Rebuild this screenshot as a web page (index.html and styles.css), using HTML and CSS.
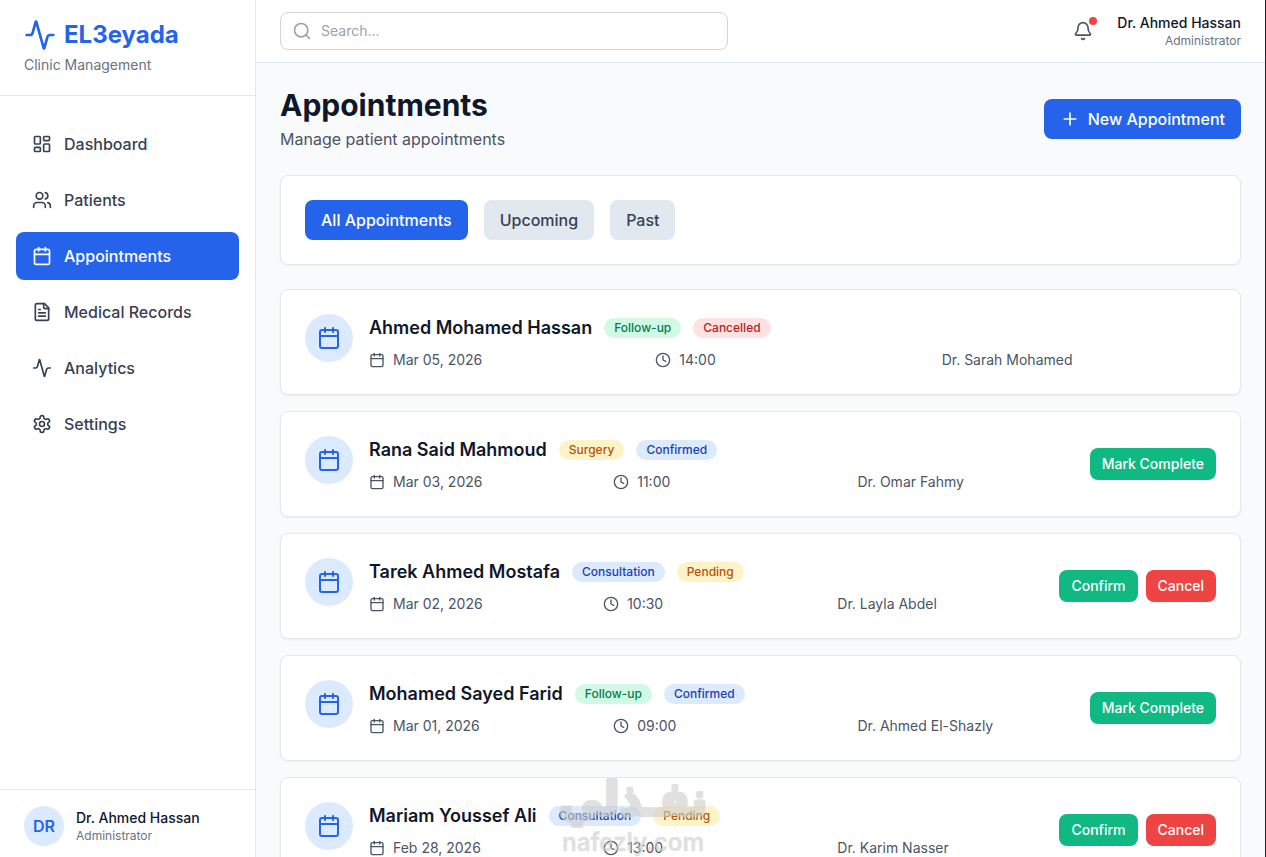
FILE: index.html
```html
<!DOCTYPE html>
<html lang="en">
<head>
<meta charset="utf-8">
<title>EL3eyada - Appointments</title>
<link rel="stylesheet" href="styles.css">
</head>
<body>
<svg class="sprite" aria-hidden="true">
  <symbol id="activity" viewBox="0 0 24 24"><path d="M22 12h-2.48a2 2 0 0 0-1.93 1.46l-2.35 8.36a.25.25 0 0 1-.48 0L9.24 2.18a.25.25 0 0 0-.48 0l-2.35 8.36A2 2 0 0 1 4.49 12H2"/></symbol>
  <symbol id="dashboard" viewBox="0 0 24 24"><rect x="3" y="3" width="7" height="9" rx="1"/><rect x="14" y="3" width="7" height="5" rx="1"/><rect x="14" y="12" width="7" height="9" rx="1"/><rect x="3" y="16" width="7" height="5" rx="1"/></symbol>
  <symbol id="users" viewBox="0 0 24 24"><path d="M16 21v-2a4 4 0 0 0-4-4H6a4 4 0 0 0-4 4v2"/><circle cx="9" cy="7" r="4"/><path d="M22 21v-2a4 4 0 0 0-3-3.87"/><path d="M16 3.13a4 4 0 0 1 0 7.75"/></symbol>
  <symbol id="calendar" viewBox="0 0 24 24"><path d="M8 2v4"/><path d="M16 2v4"/><rect x="3" y="4" width="18" height="18" rx="2"/><path d="M3 10h18"/></symbol>
  <symbol id="file" viewBox="0 0 24 24"><path d="M15 2H6a2 2 0 0 0-2 2v16a2 2 0 0 0 2 2h12a2 2 0 0 0 2-2V7Z"/><path d="M14 2v4a2 2 0 0 0 2 2h4"/><path d="M10 9H8"/><path d="M16 13H8"/><path d="M16 17H8"/></symbol>
  <symbol id="settings" viewBox="0 0 24 24"><path d="M12.22 2h-.44a2 2 0 0 0-2 2v.18a2 2 0 0 1-1 1.73l-.43.25a2 2 0 0 1-2 0l-.15-.08a2 2 0 0 0-2.73.73l-.22.38a2 2 0 0 0 .73 2.73l.15.1a2 2 0 0 1 1 1.72v.51a2 2 0 0 1-1 1.74l-.15.09a2 2 0 0 0-.73 2.73l.22.38a2 2 0 0 0 2.73.73l.15-.08a2 2 0 0 1 2 0l.43.25a2 2 0 0 1 1 1.73V20a2 2 0 0 0 2 2h.44a2 2 0 0 0 2-2v-.18a2 2 0 0 1 1-1.73l.43-.25a2 2 0 0 1 2 0l.15.08a2 2 0 0 0 2.73-.73l.22-.39a2 2 0 0 0-.73-2.73l-.15-.08a2 2 0 0 1-1-1.74v-.5a2 2 0 0 1 1-1.74l.15-.09a2 2 0 0 0 .73-2.73l-.22-.38a2 2 0 0 0-2.73-.73l-.15.08a2 2 0 0 1-2 0l-.43-.25a2 2 0 0 1-1-1.73V4a2 2 0 0 0-2-2z"/><circle cx="12" cy="12" r="3"/></symbol>
  <symbol id="search" viewBox="0 0 24 24"><circle cx="11" cy="11" r="8"/><path d="m21 21-4.3-4.3"/></symbol>
  <symbol id="bell" viewBox="0 0 24 24"><path d="M10.268 21a2 2 0 0 0 3.464 0"/><path d="M3.262 15.326A1 1 0 0 0 4 17h16a1 1 0 0 0 .74-1.673C19.41 13.956 18 12.499 18 8A6 6 0 0 0 6 8c0 4.499-1.411 5.956-2.738 7.326"/></symbol>
  <symbol id="plus" viewBox="0 0 24 24"><path d="M5 12h14"/><path d="M12 5v14"/></symbol>
  <symbol id="clock" viewBox="0 0 24 24"><circle cx="12" cy="12" r="10"/><path d="M12 6v6l4 2"/></symbol>
</svg>

<div class="app">
  <aside class="sidebar">
    <div class="brand">
      <div class="brand-row"><svg class="icon icon-32"><use href="#activity"/></svg><span class="brand-name">EL3eyada</span></div>
      <p class="brand-sub">Clinic Management</p>
    </div>
    <nav class="nav">
      <a class="nav-item"><svg class="icon icon-20"><use href="#dashboard"/></svg>Dashboard</a>
      <a class="nav-item"><svg class="icon icon-20"><use href="#users"/></svg>Patients</a>
      <a class="nav-item active"><svg class="icon icon-20"><use href="#calendar"/></svg>Appointments</a>
      <a class="nav-item"><svg class="icon icon-20"><use href="#file"/></svg>Medical Records</a>
      <a class="nav-item"><svg class="icon icon-20"><use href="#activity"/></svg>Analytics</a>
      <a class="nav-item"><svg class="icon icon-20"><use href="#settings"/></svg>Settings</a>
    </nav>
    <div class="account">
      <div class="avatar">DR</div>
      <div><p class="user-name">Dr. Ahmed Hassan</p><p class="user-role">Administrator</p></div>
    </div>
  </aside>

  <div class="page">
    <header class="topbar">
      <div class="search"><svg class="icon icon-20"><use href="#search"/></svg><span>Search...</span></div>
      <div class="topbar-right">
        <div class="bell"><svg class="icon icon-20"><use href="#bell"/></svg><i class="dot"></i></div>
        <div class="top-user"><p class="user-name">Dr. Ahmed Hassan</p><p class="user-role">Administrator</p></div>
      </div>
    </header>

    <main class="content">
      <div class="heading">
        <div><h1>Appointments</h1><p class="lead">Manage patient appointments</p></div>
        <button class="btn primary"><svg class="icon icon-20"><use href="#plus"/></svg>New Appointment</button>
      </div>

      <div class="card filters">
        <button class="btn primary">All Appointments</button>
        <button class="btn muted">Upcoming</button>
        <button class="btn muted">Past</button>
      </div>

      <div class="list">
        <article class="card appointment">
          <div class="badge-icon"><svg class="icon icon-24"><use href="#calendar"/></svg></div>
          <div class="info">
            <div class="title"><h3>Ahmed Mohamed Hassan</h3><span class="tag green">Follow-up</span><span class="tag red">Cancelled</span></div>
            <div class="meta"><span><svg class="icon icon-16"><use href="#calendar"/></svg>Mar 05, 2026</span><span><svg class="icon icon-16"><use href="#clock"/></svg>14:00</span><span>Dr. Sarah Mohamed</span></div>
          </div>
        </article>
        <article class="card appointment">
          <div class="badge-icon"><svg class="icon icon-24"><use href="#calendar"/></svg></div>
          <div class="info">
            <div class="title"><h3>Rana Said Mahmoud</h3><span class="tag yellow">Surgery</span><span class="tag blue">Confirmed</span></div>
            <div class="meta"><span><svg class="icon icon-16"><use href="#calendar"/></svg>Mar 03, 2026</span><span><svg class="icon icon-16"><use href="#clock"/></svg>11:00</span><span>Dr. Omar Fahmy</span></div>
          </div>
          <div class="actions"><button class="btn small success">Mark Complete</button></div>
        </article>
        <article class="card appointment">
          <div class="badge-icon"><svg class="icon icon-24"><use href="#calendar"/></svg></div>
          <div class="info">
            <div class="title"><h3>Tarek Ahmed Mostafa</h3><span class="tag blue">Consultation</span><span class="tag yellow">Pending</span></div>
            <div class="meta"><span><svg class="icon icon-16"><use href="#calendar"/></svg>Mar 02, 2026</span><span><svg class="icon icon-16"><use href="#clock"/></svg>10:30</span><span>Dr. Layla Abdel</span></div>
          </div>
          <div class="actions"><button class="btn small success">Confirm</button><button class="btn small danger">Cancel</button></div>
        </article>
        <article class="card appointment">
          <div class="badge-icon"><svg class="icon icon-24"><use href="#calendar"/></svg></div>
          <div class="info">
            <div class="title"><h3>Mohamed Sayed Farid</h3><span class="tag green">Follow-up</span><span class="tag blue">Confirmed</span></div>
            <div class="meta"><span><svg class="icon icon-16"><use href="#calendar"/></svg>Mar 01, 2026</span><span><svg class="icon icon-16"><use href="#clock"/></svg>09:00</span><span>Dr. Ahmed El-Shazly</span></div>
          </div>
          <div class="actions"><button class="btn small success">Mark Complete</button></div>
        </article>
        <article class="card appointment">
          <div class="badge-icon"><svg class="icon icon-24"><use href="#calendar"/></svg></div>
          <div class="info">
            <div class="title"><h3>Mariam Youssef Ali</h3><span class="tag blue">Consultation</span><span class="tag yellow">Pending</span></div>
            <div class="meta"><span><svg class="icon icon-16"><use href="#calendar"/></svg>Feb 28, 2026</span><span><svg class="icon icon-16"><use href="#clock"/></svg>13:00</span><span>Dr. Karim Nasser</span></div>
          </div>
          <div class="actions"><button class="btn small success">Confirm</button><button class="btn small danger">Cancel</button></div>
        </article>
      </div>
    </main>
  </div>
</div>

<svg class="watermark" viewBox="0 0 160 92" aria-hidden="true">
  <text class="wm-ar" x="80" y="50" text-anchor="middle" textLength="148" lengthAdjust="spacingAndGlyphs" direction="rtl" lang="ar">نفـذلي</text>
  <text class="wm-en" x="9" y="86" textLength="142" lengthAdjust="spacingAndGlyphs">nafezly.com</text>
</svg>
</body>
</html>
```
FILE: styles.css
```css
* { box-sizing: border-box; margin: 0; padding: 0; }

body {
  height: 857px;
  overflow: hidden;
  background: #f9fafc;
  color: #0f172a;
  font: 16px/24px Inter, "Liberation Sans", sans-serif;
}

.sprite { display: none; }

.icon {
  flex: none;
  display: block;
  fill: none;
  stroke: currentColor;
  stroke-width: 2;
  stroke-linecap: round;
  stroke-linejoin: round;
}
.icon-16 { width: 16px; height: 16px; }
.icon-20 { width: 20px; height: 20px; }
.icon-24 { width: 24px; height: 24px; }
.icon-32 { width: 32px; height: 32px; }

.app {
  display: flex;
  height: 857px;
  overflow: hidden;
  border-right: 1px solid #1c1e22;
}

/* Sidebar */
.sidebar {
  flex: none;
  display: flex;
  flex-direction: column;
  width: 256px;
  background: #fff;
  border-right: 1px solid #e2e8f0;
}
.brand { padding: 19px 24px 20px; border-bottom: 1px solid #e2e8f0; }
.brand-row { display: flex; align-items: center; gap: 8px; color: #2563eb; }
.brand-name { font-size: 24px; line-height: 32px; font-weight: 700; }
.brand-sub { margin-top: 4px; font-size: 14px; line-height: 20px; color: #6b7280; }

.nav { flex: 1; display: flex; flex-direction: column; gap: 8px; padding: 24px 16px; }
.nav-item {
  display: flex;
  align-items: center;
  gap: 12px;
  padding: 12px 16px;
  border-radius: 8px;
  font-weight: 500;
  color: #374151;
}
.nav-item.active { background: #2563eb; color: #fff; }

.account {
  display: flex;
  align-items: center;
  gap: 12px;
  padding: 16px 24px 11px;
  border-top: 1px solid #e2e8f0;
}
.avatar {
  display: flex;
  align-items: center;
  justify-content: center;
  width: 40px;
  height: 40px;
  border-radius: 50%;
  background: #dbeafe;
  color: #2563eb;
  font-weight: 600;
}
.user-name { font-size: 14px; line-height: 20px; font-weight: 500; }
.user-role { font-size: 12px; line-height: 16px; color: #6b7280; }

/* Top bar */
.page { flex: 1; min-width: 0; }
.topbar {
  display: flex;
  align-items: center;
  justify-content: space-between;
  height: 63px;
  padding: 0 24px;
  background: #fff;
  border-bottom: 1px solid #e2e8f0;
}
.search {
  display: flex;
  align-items: center;
  gap: 9px;
  width: 448px;
  height: 38px;
  padding: 0 11px;
  border: 1px solid #d1d5db;
  border-radius: 8px;
  color: #9ca3af;
  font-size: 14px;
}
.topbar-right { display: flex; align-items: center; gap: 16px; }
.bell { position: relative; padding: 8px; color: #4b5563; }
.dot {
  position: absolute;
  top: 4px;
  right: 4px;
  width: 8px;
  height: 8px;
  border-radius: 50%;
  background: #ef4444;
}
.top-user { text-align: right; }

/* Content */
.content { padding: 24px; }
.heading {
  display: flex;
  align-items: center;
  justify-content: space-between;
  margin-bottom: 24px;
}
h1 { font-size: 30px; line-height: 36px; font-weight: 700; }
.lead { margin-top: 4px; color: #4b5563; }

.btn {
  display: flex;
  align-items: center;
  gap: 8px;
  padding: 8px 16px;
  border: 0;
  border-radius: 8px;
  font: inherit;
  font-weight: 500;
  white-space: nowrap;
}
.primary { background: #2563eb; color: #fff; }
.muted { background: #e2e8f0; color: #374151; }
.success { background: #10b981; color: #fff; }
.danger { background: #ef4444; color: #fff; }
.small { padding: 6px 12px; font-size: 14px; line-height: 20px; }

.card {
  padding: 24px;
  background: #fff;
  border: 1px solid #e5e7eb;
  border-radius: 8px;
  box-shadow: 0 1px 2px rgba(0, 0, 0, 0.05);
}
.filters { display: flex; gap: 16px; margin-bottom: 24px; }

.list { display: flex; flex-direction: column; gap: 16px; }
.appointment { display: flex; }
.badge-icon {
  flex: none;
  display: flex;
  align-items: center;
  justify-content: center;
  width: 48px;
  height: 48px;
  margin-right: 16px;
  border-radius: 50%;
  background: #dbeafe;
  color: #2563eb;
}
.info { flex: 1; min-width: 0; }
.title { display: flex; align-items: center; gap: 12px; margin-bottom: 8px; }
h3 { font-size: 18px; line-height: 28px; font-weight: 600; }
.tag {
  padding: 2px 10px;
  border-radius: 10px;
  font-size: 12px;
  line-height: 16px;
  font-weight: 500;
}
.green { background: #d1fae5; color: #047857; }
.red { background: #fee2e2; color: #b91c1c; }
.yellow { background: #fef3c7; color: #b45309; }
.blue { background: #dbeafe; color: #1e40af; }

.meta {
  display: grid;
  grid-template-columns: repeat(3, minmax(0, 1fr));
  gap: 12px;
  font-size: 14px;
  line-height: 20px;
  color: #4b5563;
}
.meta span { display: flex; align-items: center; gap: 8px; }
.actions { display: flex; align-items: center; gap: 8px; }

/* Overlaid site mark */
.watermark {
  position: absolute;
  left: 553px;
  top: 765px;
  width: 160px;
  height: 92px;
  fill: #cdcdcd;
  stroke: #cdcdcd;
  stroke-linejoin: round;
  opacity: 0.6;
}
.wm-ar { font: 700 46px "DejaVu Sans", sans-serif; stroke-width: 4px; }
.wm-en { font: 600 25px Inter, sans-serif; stroke-width: 0.4px; }
```
